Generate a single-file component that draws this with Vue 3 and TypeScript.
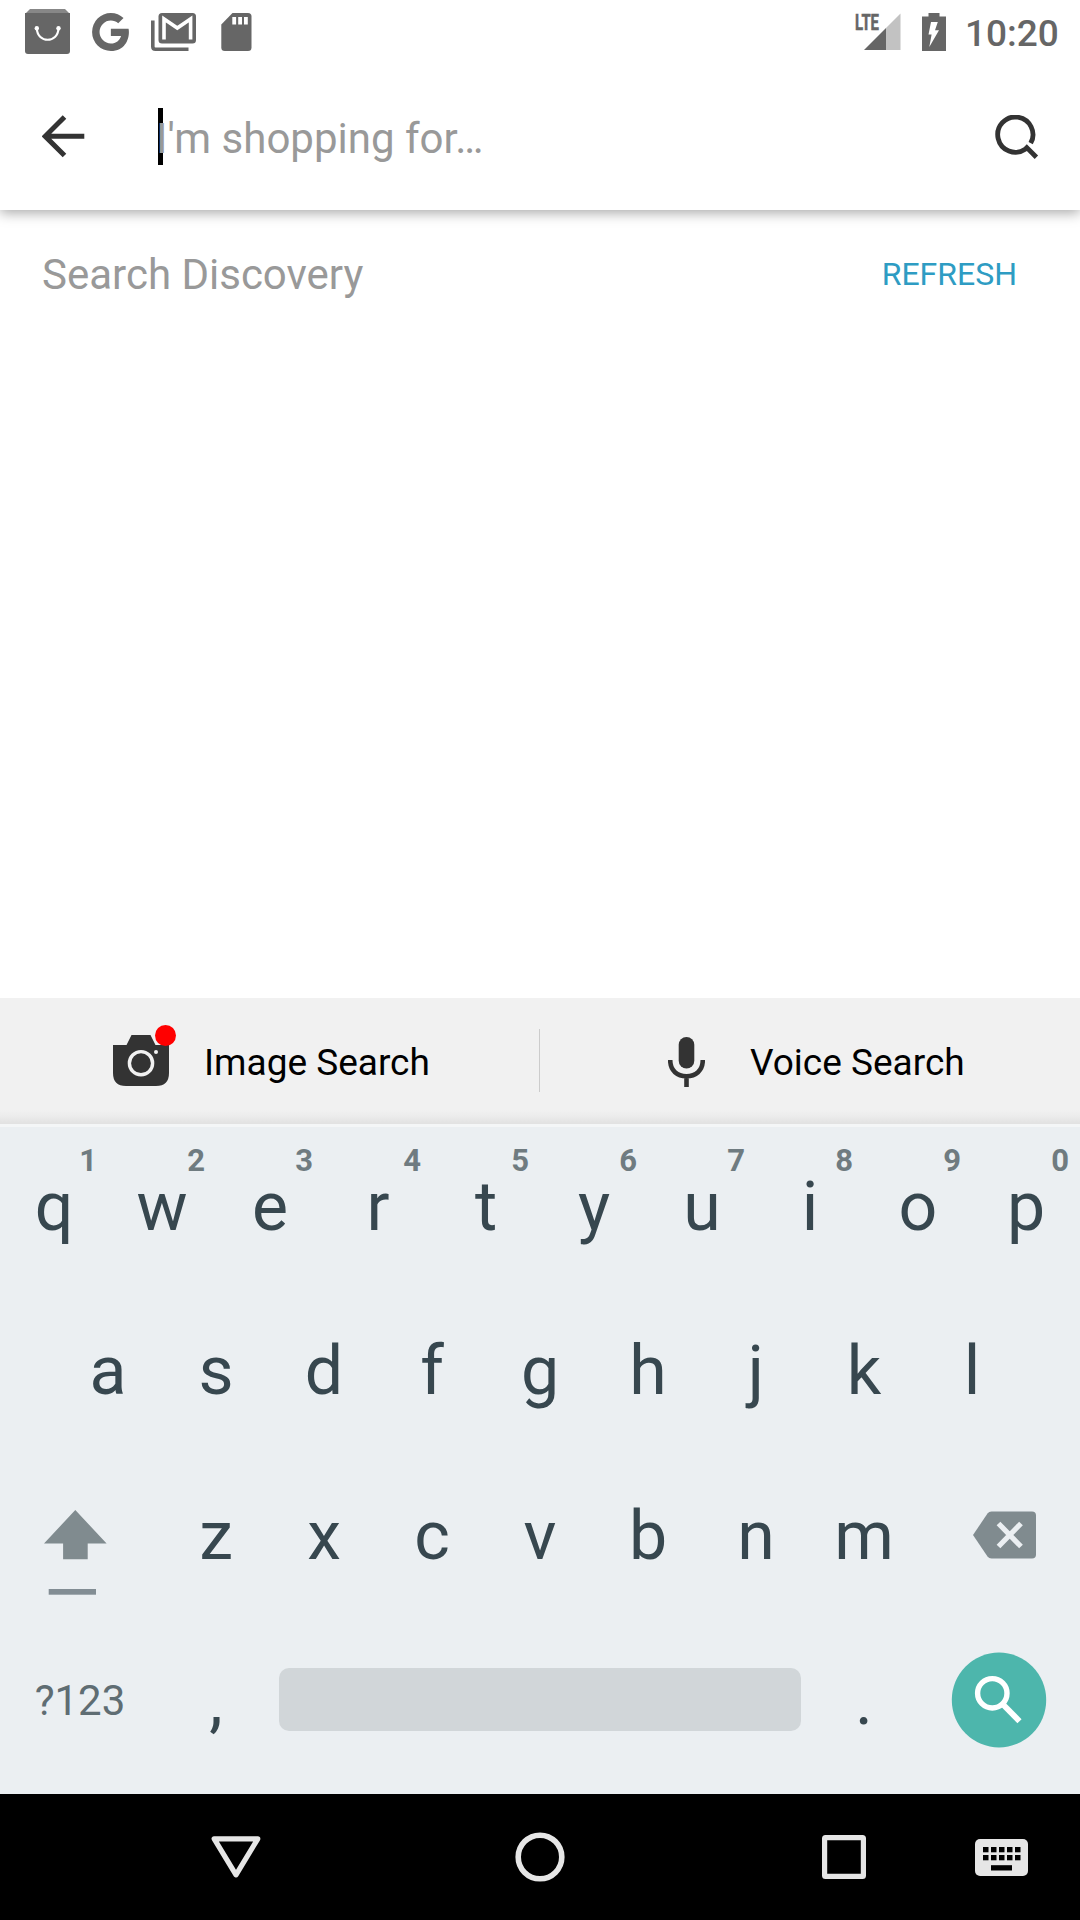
<script setup lang="ts">
interface Key {
  label: string
  hint?: string
}

const topRow: Key[] = [...'qwertyuiop'].map((label, i) => ({ label, hint: String((i + 1) % 10) }))
const homeRow: Key[] = [...'asdfghjkl'].map((label) => ({ label }))
const bottomRow: Key[] = [...'zxcvbnm'].map((label) => ({ label }))
const padColumns: number[] = [8, 16, 24, 32, 40]
</script>

<template>
  <div class="screen">
    <header class="status">
      <svg class="st-bag" width="45" height="45" viewBox="0 0 45 45">
        <path d="M5 0H40L45 5H0Z" fill="#878787" />
        <path d="M0 4H45V42Q45 45 42 45H3Q0 45 0 42Z" fill="#666" />
        <g fill="#fff">
          <circle cx="11.8" cy="19.3" r="2.2" />
          <circle cx="33.5" cy="19.3" r="2.2" />
        </g>
        <path d="M11.8 19.5C12.5 34.5 32.8 34.5 33.5 19.5" fill="none" stroke="#fff" stroke-width="2.2" />
      </svg>
      <svg class="st-g" width="37" height="38" viewBox="2.5 2 19.7 20" preserveAspectRatio="none">
        <path fill="#666" d="M12.545 10.239v3.821h5.445c-.712 2.315-2.647 3.972-5.445 3.972a6.033 6.032 0 1 1 0-12.064c1.498 0 2.866.549 3.921 1.453l2.814-2.814C17.503 2.988 15.139 2 12.545 2a10 10 0 1 0 0 20c8.396 0 10.249-7.85 9.426-11.748z" />
      </svg>
      <svg class="st-mail" width="45" height="38" viewBox="0 0 45 38">
        <path d="M1.8 7.5V33.5Q1.8 36.2 4.5 36.2H37.5" fill="none" stroke="#666" stroke-width="3.6" />
        <rect x="7.5" y="0" width="37.5" height="30.5" rx="3.5" fill="#666" />
        <path d="M13 26.5V6L26.3 15L39.6 6V26.5" fill="none" stroke="#fff" stroke-width="3.6" />
      </svg>
      <svg class="st-sd" width="31" height="38" viewBox="0 0 31 38">
        <path d="M11.5 0H27Q30.5 0 30.5 3.5V34.5Q30.5 38 27 38H3.8Q.3 38 .3 34.5V11.5Z" fill="#666" />
        <path d="M11.3 4h3.8v7.5h-3.8zM17.2 4h3.8v7.5h-3.8zM23 4h3.8v7.5h-3.8z" fill="#fff" />
      </svg>
      <svg class="st-signal" width="46" height="58" viewBox="0 -10 46 58">
        <path d="M31 15L45.5 .5V37H31Z" fill="#c2c2c2" />
        <path d="M9 37L31 15V37Z" fill="#666" />
        <text x="0" y="16.5" class="lte" textLength="24" lengthAdjust="spacingAndGlyphs">LTE</text>
      </svg>
      <svg class="st-battery" width="24" height="38" viewBox="0 0 24 38">
        <path d="M6.5 0H17.5V3.5H24V38H0V3.5H6.5Z" fill="#666" />
        <path d="M9 9H15.8L13 17.3H17L7.3 34L9.6 21.5H6.5Z" fill="#fff" />
      </svg>
      <span class="clock">10:20</span>
    </header>

    <section class="toolbar">
      <svg class="back" width="43" height="43" viewBox="0 0 43 43">
        <path d="M22.5 2L3.2 21.3L22.5 40.6M3.2 21.3H42.3" fill="none" stroke="#333" stroke-width="5" />
      </svg>
      <div class="field">
        <i class="caret"></i>
        <span class="placeholder">I'm shopping for…</span>
      </div>
      <svg class="find" width="45" height="45" viewBox="0 0 45 45">
        <path d="M36.7 28.2A17.6 17.6 0 1 0 31.2 34.2L32.8 32.6L42.4 42.2" fill="none" stroke="#333" stroke-width="4.8" />
      </svg>
    </section>

    <main class="content">
      <div class="discovery">
        <span class="title">Search Discovery</span>
        <span class="refresh">REFRESH</span>
      </div>
    </main>

    <section class="modes">
      <div class="mode image">
        <div class="cam">
          <svg width="56" height="51" viewBox="0 0 56 51">
            <path d="M0 10H13.5L18.5 0H37.5L42.5 10H56V38Q56 51 43 51H13Q0 51 0 38Z" fill="#333" />
            <circle cx="28" cy="28.2" r="11.6" fill="none" stroke="#f1f1f1" stroke-width="3.4" />
            <circle cx="43" cy="17" r="2" fill="#f1f1f1" />
          </svg>
          <i class="dot"></i>
        </div>
        <span class="mode-label">Image Search</span>
      </div>
      <i class="divider"></i>
      <div class="mode voice">
        <svg width="37" height="50" viewBox="0 0 37 50">
          <rect x="10.7" y="0" width="15.6" height="31.5" rx="7.8" fill="#333" />
          <path d="M2.2 23C2.2 34 9.5 39.2 18.5 39.2S34.8 34 34.8 23M18.5 39V50" fill="none" stroke="#333" stroke-width="4.6" />
        </svg>
        <span class="mode-label">Voice Search</span>
      </div>
    </section>

    <section class="keyboard">
      <div class="row first">
        <span v-for="key in topRow" :key="key.label" class="key">
          {{ key.label }}<small class="hint">{{ key.hint }}</small>
        </span>
      </div>
      <div class="row">
        <span v-for="key in homeRow" :key="key.label" class="key">{{ key.label }}</span>
      </div>
      <div class="row">
        <span class="key wide shift">
          <svg width="63" height="85" viewBox="0 0 63 85">
            <path d="M31.3 0L62.6 33.5H43.7V49.3H19.1V33.5H0Z" fill="#808b8f" />
            <rect x="4.7" y="79" width="47.3" height="5.7" fill="#828d94" />
          </svg>
        </span>
        <span v-for="key in bottomRow" :key="key.label" class="key">{{ key.label }}</span>
        <span class="key wide delete">
          <svg width="64" height="48" viewBox="0 0 64 48">
            <path d="M0 24L14.5 2.5Q16 .5 18.5 .5H59Q63 .5 63 4.5V43.5Q63 47.5 59 47.5H18.5Q16 47.5 14.5 45.5Z" fill="#808b8f" />
            <path d="M25.5 12.5L48 35.5M48 12.5L25.5 35.5" fill="none" stroke="#ebeff2" stroke-width="5.2" />
          </svg>
        </span>
      </div>
      <div class="row">
        <span class="key wide symbols">?123</span>
        <span class="key">,</span>
        <span class="space"></span>
        <span class="key">.</span>
        <span class="key wide">
          <svg class="go" width="96" height="96" viewBox="0 0 96 96">
            <ellipse cx="48" cy="48" rx="47.2" ry="47.4" fill="#4db6ac" />
            <circle cx="41.3" cy="41.3" r="14.7" fill="none" stroke="#fff" stroke-width="5.4" />
            <path d="M52.5 53L68.5 69.2" fill="none" stroke="#fff" stroke-width="5.8" />
          </svg>
        </span>
      </div>
    </section>

    <nav class="navbar">
      <svg class="nav-back" width="50" height="44" viewBox="0 0 50 44">
        <path d="M3.2 3.8H46.8L25 39.8Z" fill="none" stroke="#e6e6e6" stroke-width="5.2" stroke-linejoin="round" />
      </svg>
      <svg class="nav-home" width="50" height="50" viewBox="0 0 50 50">
        <circle cx="25" cy="25" r="21.8" fill="none" stroke="#e6e6e6" stroke-width="5.6" />
      </svg>
      <svg class="nav-recent" width="44" height="44" viewBox="0 0 44 44">
        <path fill="#e6e6e6" fill-rule="evenodd" d="M3.5 0H40.5Q44 0 44 3.5V40.5Q44 44 40.5 44H3.5Q0 44 0 40.5V3.5Q0 0 3.5 0ZM5.2 5.2V38.8H38.8V5.2Z" />
      </svg>
      <svg class="nav-ime" width="53" height="37" viewBox="0 0 53 37">
        <rect width="53" height="37" rx="5" fill="#e6e6e6" />
        <template v-for="x in padColumns" :key="x">
          <rect :x="x" y="8" width="5.5" height="5.3" />
          <rect :x="x" y="16" width="5.5" height="5.3" />
        </template>
        <rect x="16" y="26.2" width="21" height="5.3" />
      </svg>
    </nav>
  </div>
</template>

<style>
body {
  background: #fff;
}
</style>

<style scoped>
.screen {
  width: 1080px;
  height: 1920px;
  display: flex;
  flex-direction: column;
  overflow: hidden;
  background: #fff;
  font-family: Roboto, 'Liberation Sans', sans-serif;
}
svg {
  display: block;
  flex: none;
}
.status {
  position: relative;
  z-index: 2;
  height: 63px;
  display: flex;
  align-items: center;
  padding-left: 25px;
  background: #fff;
}
.st-g { margin-left: 22px; }
.st-mail { margin-left: 22px; }
.st-sd { margin-left: 25px; }
.st-signal { margin-left: 603px; }
.st-battery { margin-left: 21px; }
.lte {
  font-size: 22.5px;
  font-weight: 700;
  fill: #666;
  stroke: #666;
  stroke-width: 0.6px;
}
.clock {
  margin-left: 19px;
  margin-top: 4px;
  font-size: 37px;
  line-height: 59px;
  font-weight: 500;
  color: #666;
}
.toolbar {
  position: relative;
  z-index: 1;
  height: 147px;
  display: flex;
  align-items: center;
  box-sizing: border-box;
  padding: 0 41px 0 42px;
  background: #fff;
  box-shadow: 0 3px 12px rgba(0, 0, 0, 0.34);
}
.find {
  margin-top: 1px;
}
.field {
  display: flex;
  align-items: center;
  flex: 1;
  margin-left: 73px;
}
.caret {
  width: 5px;
  height: 57px;
  background: #000;
}
.placeholder {
  position: relative;
  margin: 5px 0 0 -7px;
  font-size: 42px;
  line-height: 50px;
  color: #999;
  white-space: pre;
}
.content {
  flex: 1;
}
.discovery {
  display: flex;
  justify-content: space-between;
  align-items: center;
  height: 128px;
  padding: 0 63px 0 42px;
}
.title {
  font-size: 42px;
  color: #999;
}
.refresh {
  font-size: 32px;
  color: #2e9cc3;
}
.modes {
  height: 126px;
  display: flex;
  align-items: center;
  background: linear-gradient(#f1f1f1 112px, #ececec 118px, #e1e1e1);
}
.mode {
  display: flex;
  align-items: center;
  box-sizing: border-box;
}
.image {
  width: 539px;
  padding-left: 113px;
}
.voice {
  width: 540px;
  padding-left: 128px;
}
.cam {
  position: relative;
  margin-top: -1px;
}
.dot {
  position: absolute;
  left: 42px;
  top: -10px;
  width: 21px;
  height: 21px;
  border-radius: 50%;
  background: #f00;
}
.mode-label {
  font-size: 37px;
  line-height: 44px;
  color: #000;
}
.image .mode-label { margin: 3px 0 0 35px; }
.voice .mode-label { margin: 3px 0 0 45px; }
.voice svg { margin-top: 1px; }
.divider {
  width: 1px;
  height: 63px;
  margin-top: -1px;
  background: #ccc;
}
.keyboard {
  height: 670px;
  box-sizing: border-box;
  border-top: 3px solid #f4f6f7;
  background: #ebeff2;
}
.row {
  height: 165px;
  display: flex;
  justify-content: center;
  align-items: center;
}
.row.first {
  height: 159px;
  margin-bottom: 2px;
}
.key {
  position: relative;
  width: 108px;
  height: 100%;
  display: flex;
  align-items: center;
  justify-content: center;
  font-size: 68px;
  line-height: 80px;
  color: #37474f;
}
.wide {
  width: 162px;
}
.hint {
  position: absolute;
  right: 11px;
  top: 16px;
  font-size: 31px;
  line-height: 36px;
  font-weight: 700;
  color: #6f7b80;
}
.shift svg { margin: 34px 11px 0 0; }
.delete svg { margin: 0 0 2px 12px; }
.symbols {
  box-sizing: border-box;
  padding-right: 2px;
  font-size: 42px;
  color: #5f6d73;
}
.space {
  width: 522px;
  height: 63px;
  margin: 0 9px 2px;
  border-radius: 10px;
  background: #d1d6d9;
}
.go { margin-bottom: 2px; }
.navbar {
  height: 126px;
  display: flex;
  align-items: center;
  background: #000;
}
.nav-back { margin-left: 211px; }
.nav-home { margin-left: 254px; }
.nav-recent { margin-left: 257px; }
.nav-ime { margin-left: 109px; }
</style>
